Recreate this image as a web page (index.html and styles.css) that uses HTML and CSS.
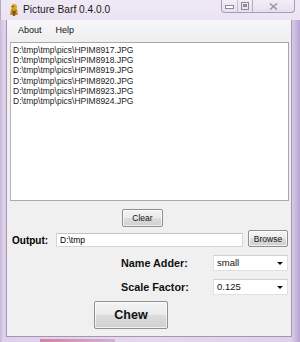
FILE: index.html
```
<!DOCTYPE html>
<html lang="en">
<head>
    <meta charset="UTF-8">
    <title>Picture Barf 0.4.0.0</title>
    <link rel="stylesheet" href="styles.css">
</head>
<body>
    <div class="window">
        <div class="titlebar">
            <svg class="app-icon" width="10" height="14" viewBox="0 0 10 14">
                <ellipse cx="5" cy="4" rx="3" ry="3" fill="#d9a826"/>
                <path d="M2 6 L8 6 L9 12 L1 12 Z" fill="#c89420"/>
                <path d="M3 8 L7 8 L6 13 L4 13 Z" fill="#7a5a1a"/>
                <circle cx="4" cy="3.5" r="0.8" fill="#4a3410"/>
            </svg>
            <span class="title">Picture Barf 0.4.0.0</span>
            <div class="caption">
                <div class="cap-btn min">
                    <svg width="9" height="5" viewBox="0 0 9 5"><rect x="0.5" y="0.5" width="8" height="3" fill="#fff" stroke="#8a8a98"/></svg>
                </div>
                <div class="cap-btn max">
                    <svg width="8" height="8" viewBox="0 0 8 8"><rect x="0.5" y="0.5" width="7" height="7" fill="none" stroke="#8a8a98"/><rect x="2" y="2" width="4" height="3" fill="#8a8a98"/></svg>
                </div>
                <div class="cap-btn close">
                    <svg width="9" height="7" viewBox="0 0 9 7"><path d="M1 0.5 L8 6.5 M8 0.5 L1 6.5" stroke="#9a9aa6" stroke-width="1.6" fill="none"/></svg>
                </div>
            </div>
        </div>
        <div class="client">
            <div class="menubar">
                <span>About</span>
                <span>Help</span>
            </div>
            <div class="listbox">
                <div>D:\tmp\tmp\pics\HPIM8917.JPG</div>
                <div>D:\tmp\tmp\pics\HPIM8918.JPG</div>
                <div>D:\tmp\tmp\pics\HPIM8919.JPG</div>
                <div>D:\tmp\tmp\pics\HPIM8920.JPG</div>
                <div>D:\tmp\tmp\pics\HPIM8923.JPG</div>
                <div>D:\tmp\tmp\pics\HPIM8924.JPG</div>
            </div>
            <div class="clear-row">
                <button class="btn clear">Clear</button>
            </div>
            <div class="output-row">
                <span class="output-label">Output:</span>
                <div class="textbox">D:\tmp</div>
                <button class="btn browse">Browse</button>
            </div>
            <div class="fields">
                <span class="field-label">Name Adder:</span>
                <div class="combo">small<span class="arrow"></span></div>
                <span class="field-label">Scale Factor:</span>
                <div class="combo">0.125<span class="arrow"></span></div>
            </div>
            <div class="chew-row">
                <button class="btn chew">Chew</button>
            </div>
        </div>
        <div class="taskbar-glow"></div>
    </div>
</body>
</html>
```
FILE: styles.css
```
* {
    box-sizing: border-box;
    margin: 0;
    padding: 0;
}

body {
    font-family: "Liberation Sans", Arial, sans-serif;
    background: #d4c4e4;
    overflow: hidden;
}

.window {
    width: 300px;
    height: 342px;
    padding: 0 8px 0 6px;
    background: linear-gradient(90deg, #c8b6da 0, #ddd0ea 3px, #e4d9ee 50%, #ddd0ea 97%, #b9a2d2 100%);
    position: relative;
}

.titlebar {
    height: 20px;
    margin: 0 -8px 0 -6px;
    padding-left: 8px;
    display: flex;
    align-items: flex-start;
    background: linear-gradient(180deg, #efe9f5 0, #ebe3f2 100%);
    border-left: 1px solid #b8a8c8;
}

.app-icon {
    margin-top: 3px;
}

.title {
    font-size: 10.2px;
    color: #1a1a1a;
    margin: 4px 0 0 4px;
}

.caption {
    margin-left: auto;
    margin-right: 5px;
    display: flex;
    height: 13px;
    border: 1px solid #a99cb8;
    border-top: none;
    border-radius: 0 0 4px 4px;
    background: linear-gradient(180deg, #f2eef7, #e6def0);
}

.cap-btn {
    display: flex;
    align-items: center;
    justify-content: center;
}

.cap-btn.min {
    width: 16px;
    border-right: 1px solid #c8bed4;
    padding-top: 3px;
}

.cap-btn.max {
    width: 15px;
    border-right: 1px solid #b8aac8;
}

.cap-btn.close {
    width: 41px;
}

.client {
    height: 317px;
    border: 1px solid #a496b4;
    border-top: none;
    background: #f0f0f0;
    display: flex;
    flex-direction: column;
}

.menubar {
    height: 18px;
    display: flex;
    align-items: center;
    gap: 14px;
    padding: 1px 0 0 11px;
    font-size: 9px;
    color: #111;
    background: linear-gradient(180deg, #f7f7f9, #f0f0f2);
}

.listbox {
    margin: 4px 0 0 3px;
    width: 279px;
    height: 159px;
    background: #fff;
    border: 1px solid #a8a8ac;
    border-left-color: #b4b4b8;
    padding: 2px 0 0 2px;
    font-size: 8.5px;
    line-height: 10.2px;
    color: #1c1c1c;
}

.btn {
    font-family: "Liberation Sans", Arial, sans-serif;
    color: #111;
    border: 1px solid #8e8f8f;
    border-radius: 2px;
    background: linear-gradient(180deg, #f4f4f4 0, #ebebeb 48%, #dcdcdc 52%, #d0d0d0 100%);
    box-shadow: inset 0 0 0 1px rgba(255, 255, 255, 0.7);
}

.clear-row {
    margin-top: 6px;
    padding-left: 115px;
}

.btn.clear {
    width: 41px;
    height: 18px;
    font-size: 8.5px;
}

.output-row {
    margin-top: 3px;
    display: flex;
    align-items: center;
    height: 17px;
}

.output-label {
    font-weight: bold;
    font-size: 10px;
    width: 49px;
    padding-left: 5px;
    margin-top: 3px;
}

.textbox {
    width: 187px;
    height: 14px;
    margin-top: 3px;
    background: #fff;
    border: 1px solid #d6d6d6;
    border-top-color: #c4c4c4;
    font-size: 8.5px;
    line-height: 12px;
    padding-left: 3px;
}

.btn.browse {
    width: 40px;
    height: 17px;
    margin-left: 5px;
    font-size: 8.5px;
}

.fields {
    margin-top: 8px;
    display: grid;
    grid-template-columns: 92px 75px;
    grid-auto-rows: 16px;
    row-gap: 8px;
    padding-left: 114px;
    align-items: center;
}

.field-label {
    font-weight: bold;
    font-size: 10.8px;
    color: #111;
}

.combo {
    position: relative;
    height: 16px;
    background: #fff;
    border: 1px solid #e0e0e0;
    border-top-color: #d0d0d0;
    font-size: 9.5px;
    line-height: 14px;
    padding-left: 3px;
    color: #111;
}

.arrow {
    position: absolute;
    right: 4px;
    top: 6px;
    border-left: 3px solid transparent;
    border-right: 3px solid transparent;
    border-top: 3px solid #111;
}

.chew-row {
    margin-top: 6px;
    padding-left: 87px;
}

.btn.chew {
    width: 74px;
    height: 28px;
    font-size: 12.5px;
    font-weight: bold;
}

.taskbar-glow {
    position: absolute;
    left: 40px;
    bottom: 0;
    width: 75px;
    height: 3px;
    background: linear-gradient(90deg, #d06080, #c9a0c8);
    opacity: 0.7;
}
```
